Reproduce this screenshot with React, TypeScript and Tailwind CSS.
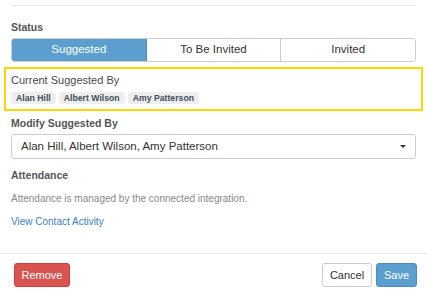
import React from 'react';

const names = ['Alan Hill', 'Albert Wilson', 'Amy Patterson'];

const App: React.FC = () => {
  return (
    <div className="w-[427px] h-[298px] bg-white overflow-hidden text-[11px] text-[#333]" style={{ fontFamily: '"Liberation Sans", Arial, sans-serif' }}>
      <div className="px-[11px] pt-[5px]">
        <div className="border-t border-[#e5e5e5]" />

        {/* Status */}
        <div className="mt-[14px] font-bold text-[#555] text-[10.5px] leading-[14px]">Status</div>
        <div className="mt-[4px] flex h-[24px] rounded-[3px] border border-[#ccc] overflow-hidden">
          <button className="flex-1 bg-[#5a9fd0] text-white text-[11.5px] border-r border-[#4a8ec0]">Suggested</button>
          <button className="flex-1 bg-white text-[#333] text-[11.5px] border-r border-[#ccc]">To Be Invited</button>
          <button className="flex-1 bg-white text-[#333] text-[11.5px]">Invited</button>
        </div>
      </div>

      {/* Current Suggested By */}
      <div className="mx-[4px] mt-[5px] h-[44px] border-2 border-[#ffd600] px-[5px] pt-[4px]">
        <div className="text-[11px] leading-[14px] text-[#4a4a4a]">Current Suggested By</div>
        <div className="mt-[5px] flex gap-[3px]">
          {names.map((n) => (
            <span key={n} className="bg-[#eeeeee] rounded-[3px] px-[5px] h-[12px] leading-[12px] text-[8.7px] font-bold text-[#3c4d5c]">
              {n}
            </span>
          ))}
        </div>
      </div>

      <div className="px-[11px]">
        <div className="mt-[5px] font-bold text-[#555] text-[10.5px] leading-[14px]">Modify Suggested By</div>
        <div className="mt-[4px] h-[25px] border border-[#ccc] rounded-[3px] flex items-center pl-[9px] pr-[9px] justify-between">
          <span className="text-[#333] text-[11.5px]">Alan Hill, Albert Wilson, Amy Patterson</span>
          <span className="w-0 h-0 border-l-[3px] border-r-[3px] border-t-[3px] border-l-transparent border-r-transparent border-t-[#333]" />
        </div>

        <div className="mt-[9px] font-bold text-[#555] text-[10.5px] leading-[14px]">Attendance</div>
        <div className="mt-[10px] text-[10px] leading-[14px] text-[#888]">Attendance is managed by the connected integration.</div>
        <div className="mt-[9px] text-[10px] leading-[14px] text-[#3a80c0]">View Contact Activity</div>
      </div>

      <div className="mt-[24px] border-t border-[#e5e5e5] flex items-center justify-between pl-[14px] pr-[10px] pt-[9px]">
        <button className="h-[24px] w-[56px] rounded-[3px] bg-[#d9534f] border border-[#d43f3a] text-white text-[11px]">Remove</button>
        <div className="flex gap-[4px]">
          <button className="h-[24px] w-[50px] rounded-[3px] bg-white border border-[#ccc] text-[#333] text-[11px]">Cancel</button>
          <button className="h-[24px] w-[41px] rounded-[3px] bg-[#5a9fd0] border border-[#4a8ec0] text-white text-[11px]">Save</button>
        </div>
      </div>
    </div>
  );
};

export default App;
